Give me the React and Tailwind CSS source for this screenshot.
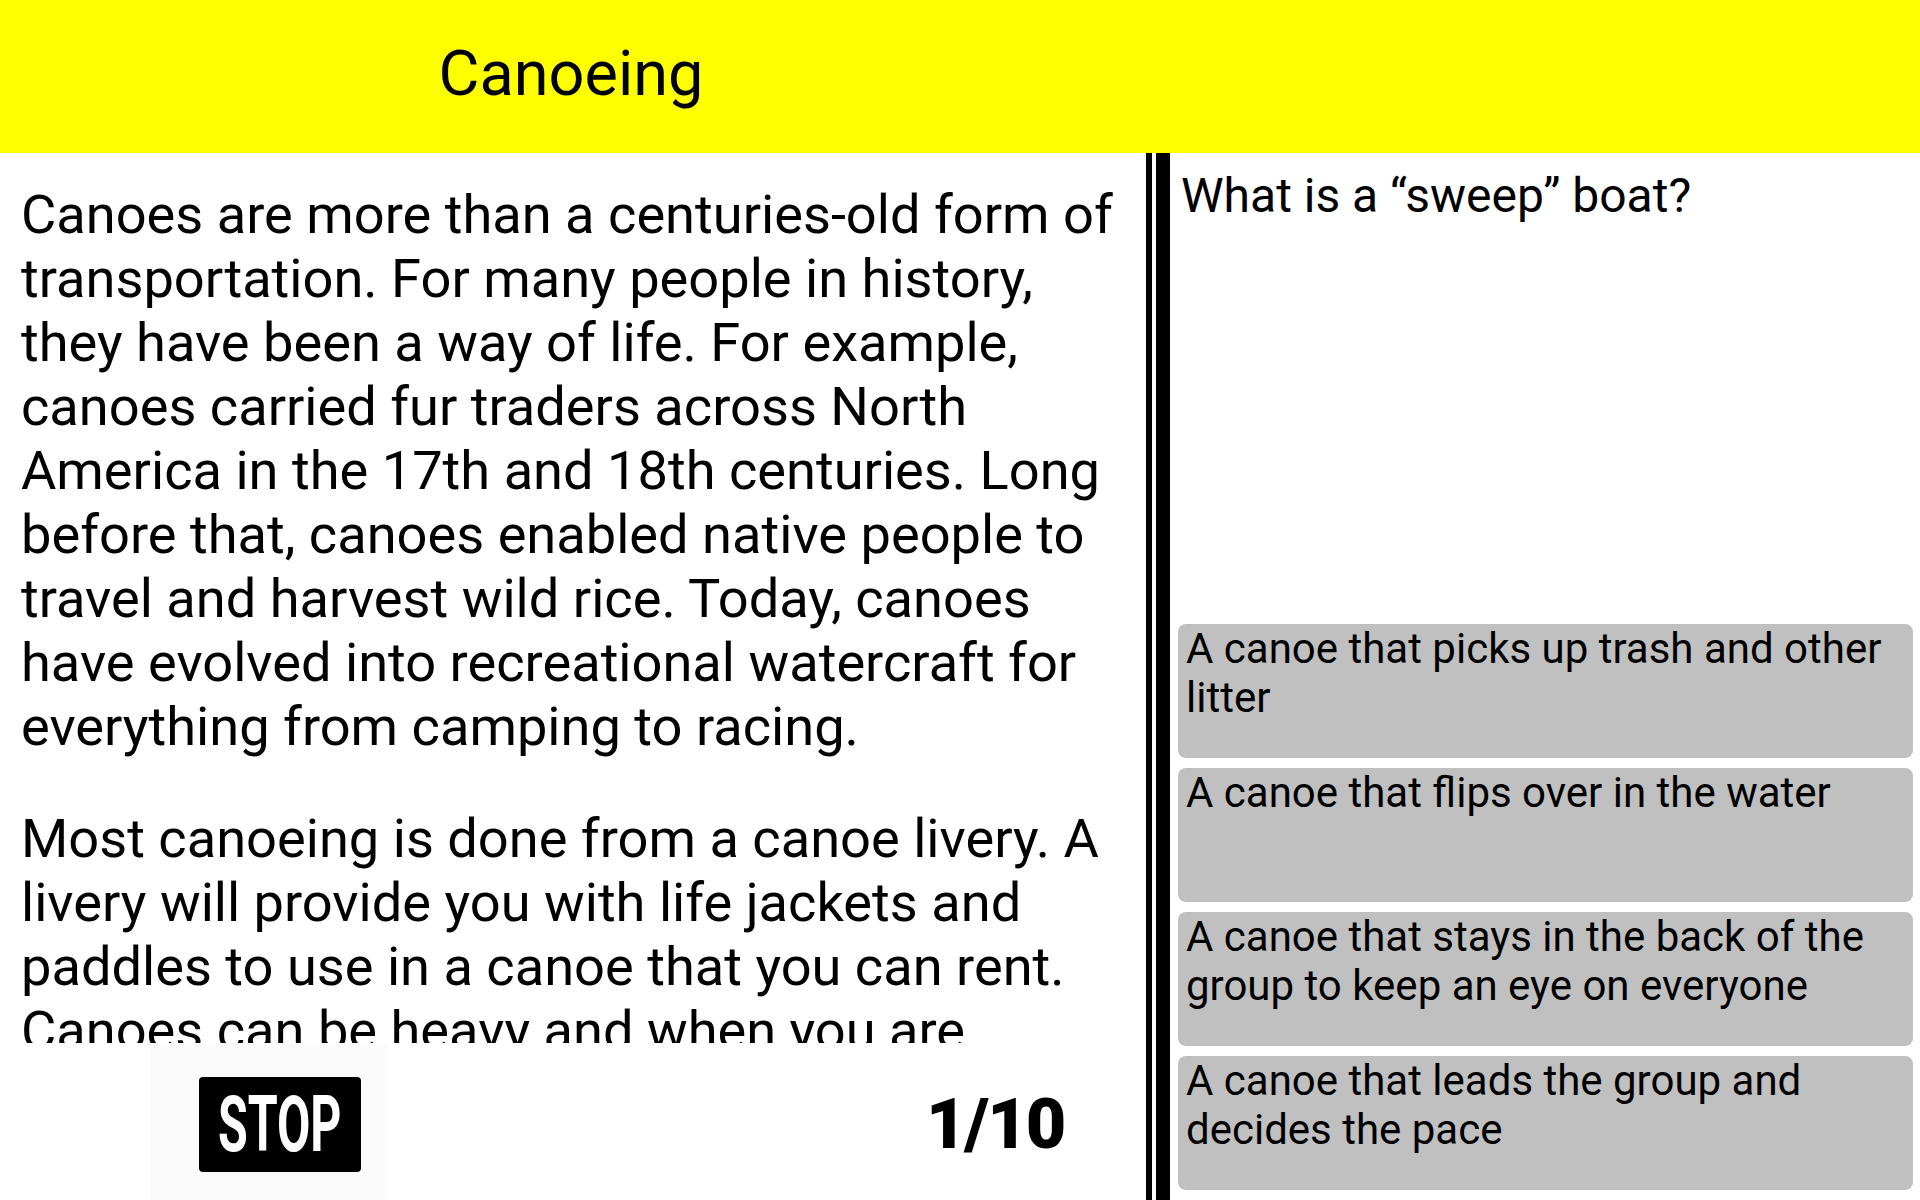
import React from 'react'

const options = [
  'A canoe that picks up trash and other litter',
  'A canoe that flips over in the water',
  'A canoe that stays in the back of the group to keep an eye on everyone',
  'A canoe that leads the group and decides the pace',
]

const App = () => {
  return (
    <div
      className="flex h-[1200px] w-[1920px] flex-col overflow-hidden bg-white text-black"
      style={{ fontFamily: 'Roboto, "Noto Sans", sans-serif' }}
    >
      {/* Header */}
      <div className="h-[153px] shrink-0 bg-[#ffff00]">
        <div className="w-[1142px] pt-[37px] text-center text-[63px] leading-[74px]">Canoeing</div>
      </div>

      <div className="flex min-h-0 flex-1">
        {/* Reading panel */}
        <div className="flex w-[1146px] shrink-0 flex-col">
          <div className="h-[890px] shrink-0 overflow-hidden pl-[21px] pr-[10px] pt-[30px] text-[54.2px] leading-[64px]">
            <p>
              Canoes are more than a centuries-old form of transportation. For many people in history, they
              have been a way of life. For example, canoes carried fur traders across North America in the
              17th and 18th centuries. Long before that, canoes enabled native people to travel and harvest
              wild rice. Today, canoes have evolved into recreational watercraft for everything from camping
              to racing.
            </p>
            <p className="mt-[48px]">
              Most canoeing is done from a canoe livery. A livery will provide you with life jackets and
              paddles to use in a canoe that you can rent. Canoes can be heavy and when you are
              finished paddling, the livery will pick you up and bring you back.
            </p>
          </div>

          {/* Bottom bar */}
          <div className="flex flex-1">
            <div className="ml-[150px] mt-px w-[238px] bg-[#fafafa] pl-[49px] pt-[33px]">
              <div className="flex h-[95px] w-[162px] items-center justify-center overflow-hidden rounded-[4px] bg-black">
                <span className="inline-block scale-x-[0.62] text-[78px] font-bold leading-none text-white">
                  STOP
                </span>
              </div>
            </div>
            <div className="ml-[538px] mt-[46px] self-start text-[70px] font-black leading-[70px] tracking-[-2px]">
              1/10
            </div>
          </div>
        </div>

        {/* Divider */}
        <div className="w-[6px] shrink-0 bg-black" />
        <div className="w-[4px] shrink-0 bg-white" />
        <div className="w-[14px] shrink-0 bg-black" />

        {/* Question panel */}
        <div className="flex flex-1 flex-col pb-[10px] pl-[8px] pr-[7px]">
          <div className="pl-[3px] pt-[15px] text-[48px] leading-[56px]">What is a “sweep” boat?</div>
          <div className="mt-auto flex flex-col gap-[10px]">
            {options.map((opt) => (
              <div
                key={opt}
                className="h-[134px] rounded-[8px] bg-[#c0c0c0] pl-[8px] pr-[8px] text-[42px] leading-[49px]"
              >
                {opt}
              </div>
            ))}
          </div>
        </div>
      </div>
    </div>
  )
}

export default App
